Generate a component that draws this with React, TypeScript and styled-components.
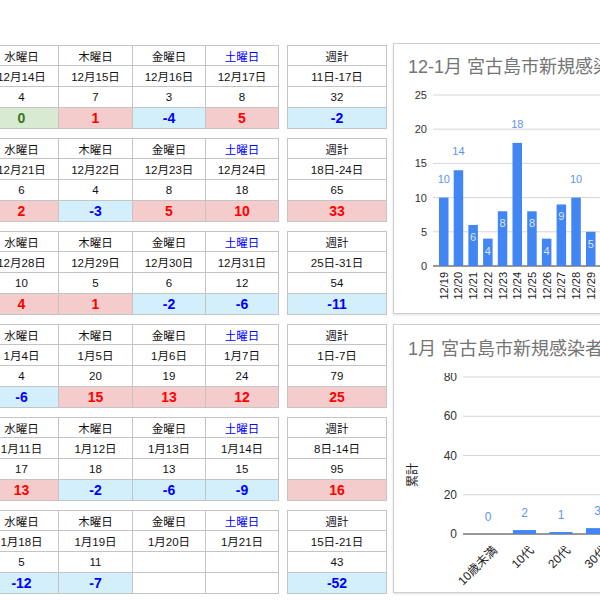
import React from 'react';
import styled, { createGlobalStyle } from 'styled-components';

const GlobalStyle = createGlobalStyle`
  html, body { margin: 0; padding: 0; overflow: hidden; background: #fff; }
  body { font-family: "Liberation Sans", Arial, "Noto Sans CJK JP", sans-serif; color: #111; }
`;

type Tone = 'zero' | 'up' | 'down' | 'none';

interface Week {
  dates: string[];
  counts: string[];
  diffs: (number | null)[];
  range: string;
  total: string;
  totalDiff: number;
}

const weeks: Week[] = [
  { dates: ['12月14日', '12月15日', '12月16日', '12月17日'], counts: ['4', '7', '3', '8'], diffs: [0, 1, -4, 5], range: '11日-17日', total: '32', totalDiff: -2 },
  { dates: ['12月21日', '12月22日', '12月23日', '12月24日'], counts: ['6', '4', '8', '18'], diffs: [2, -3, 5, 10], range: '18日-24日', total: '65', totalDiff: 33 },
  { dates: ['12月28日', '12月29日', '12月30日', '12月31日'], counts: ['10', '5', '6', '12'], diffs: [4, 1, -2, -6], range: '25日-31日', total: '54', totalDiff: -11 },
  { dates: ['1月4日', '1月5日', '1月6日', '1月7日'], counts: ['4', '20', '19', '24'], diffs: [-6, 15, 13, 12], range: '1日-7日', total: '79', totalDiff: 25 },
  { dates: ['1月11日', '1月12日', '1月13日', '1月14日'], counts: ['17', '18', '13', '15'], diffs: [13, -2, -6, -9], range: '8日-14日', total: '95', totalDiff: 16 },
  { dates: ['1月18日', '1月19日', '1月20日', '1月21日'], counts: ['5', '11', '', ''], diffs: [-12, -7, null, null], range: '15日-21日', total: '43', totalDiff: -52 },
];

const dayNames = ['水曜日', '木曜日', '金曜日', '土曜日'];

const toneOf = (v: number | null): Tone => (v === null ? 'none' : v === 0 ? 'zero' : v > 0 ? 'up' : 'down');

const toneBg: Record<Tone, string> = { zero: '#d9ead3', up: '#f4cccc', down: '#d4effc', none: '#fff' };
const toneFg: Record<Tone, string> = { zero: '#38761d', up: '#ff0000', down: '#0000ff', none: '#111' };

const Viewport = styled.div`
  width: 600px;
  height: 600px;
  overflow: hidden;
`;

const Page = styled.div`
  display: flex;
  align-items: flex-start;
  gap: 6px;
  width: max-content;
  margin-left: -16px;
  padding-top: 43px;
`;

const Weeks = styled.div`
  display: flex;
  flex-direction: column;
  gap: 9px;
  margin-top: 2px;
`;

const WeekRow = styled.div`
  display: flex;
  gap: 8px;
`;

const DayGrid = styled.div`
  display: grid;
  grid-template-columns: 74px 74px 73px 73px;
  grid-template-rows: 20px 21px 21px 21px;
  border-top: 1px solid #c4c4c4;
  border-left: 1px solid #c4c4c4;
`;

const SumGrid = styled(DayGrid)`
  grid-template-columns: 99px;
`;

const Cell = styled.div<{ $kind: 'head' | 'text' | 'diff'; $tone?: Tone; $sat?: boolean }>`
  box-sizing: border-box;
  border-right: 1px solid #c4c4c4;
  border-bottom: 1px solid #c4c4c4;
  display: flex;
  align-items: center;
  justify-content: center;
  white-space: nowrap;
  overflow: hidden;
  font-size: ${(p) => (p.$kind === 'diff' ? '14px' : '11.5px')};
  font-weight: ${(p) => (p.$kind === 'diff' ? 700 : 400)};
  color: ${(p) => (p.$kind === 'diff' ? toneFg[p.$tone ?? 'none'] : p.$sat ? '#0000ff' : '#111')};
  background: ${(p) => (p.$kind === 'diff' ? toneBg[p.$tone ?? 'none'] : '#fff')};
`;

const ChartCol = styled.div`
  display: flex;
  flex-direction: column;
  gap: 10px;
  width: 260px;
  flex-shrink: 0;
`;

const Card = styled.div<{ $h: number }>`
  box-sizing: border-box;
  height: ${(p) => p.$h}px;
  border: 1px solid #cfcfcf;
  box-shadow: 0 1px 2px rgba(0, 0, 0, 0.12);
  background: #fff;
  display: flex;
  flex-direction: column;
  overflow: hidden;
`;

const CardTitle = styled.div<{ $h: number }>`
  height: ${(p) => p.$h}px;
  line-height: ${(p) => p.$h}px;
  padding-left: 14px;
  font-size: 18px;
  color: #757575;
  white-space: nowrap;
`;

const ChartSvg = styled.svg`
  display: block;
  font-family: "Liberation Sans", Arial, "Noto Sans CJK JP", sans-serif;
  flex: 1;
`;

const daily: [string, number][] = [
  ['12/19', 10], ['12/20', 14], ['12/21', 6], ['12/22', 4], ['12/23', 8], ['12/24', 18],
  ['12/25', 8], ['12/26', 4], ['12/27', 9], ['12/28', 10], ['12/29', 5], ['12/30', 6],
  ['12/31', 12], ['1/1', 9], ['1/2', 11],
];

const BLUE = '#4285f4';

const DailyChart: React.FC = () => {
  const base = 176;
  const unit = 6.84;
  const ticks = [0, 5, 10, 15, 20, 25];
  return (
    <ChartSvg width={258} height={223}>
      {ticks.map((t) => (
        <g key={t}>
          <line x1={39} x2={400} y1={base - t * unit} y2={base - t * unit} stroke={t === 0 ? '#333' : '#d6d6d6'} strokeWidth={1} />
          <text x={33} y={base - t * unit} textAnchor="end" dominantBaseline="central" fontSize={11} fill="#333">{t}</text>
        </g>
      ))}
      {daily.map(([d, v], i) => {
        const x = 45 + 14.7 * i;
        const h = v * unit;
        const cx = x + 4.75;
        const top = base - h;
        const outside = v >= 10;
        return (
          <g key={d}>
            <rect x={x} y={top} width={9.5} height={h} fill={BLUE} />
            <text x={cx} y={outside ? top - 19 : top + 12} textAnchor="middle" dominantBaseline="central" fontSize={11} fill={outside ? '#5b95f5' : '#dbe7fd'}>{v}</text>
            <text transform={`translate(${cx + 4} 182) rotate(-90)`} textAnchor="end" fontSize={11} fill="#222">{d}</text>
          </g>
        );
      })}
    </ChartSvg>
  );
};

const ages: [string, number][] = [
  ['10歳未満', 0], ['10代', 2], ['20代', 1], ['30代', 3], ['40代', 2], ['50代', 1],
];

const AgeChart: React.FC = () => {
  const base = 161;
  const unit = 1.9625;
  const ticks = [0, 20, 40, 60, 80];
  return (
    <ChartSvg width={258} height={219}>
      {ticks.map((t) => (
        <g key={t}>
          <line x1={69} x2={400} y1={base - t * unit} y2={base - t * unit} stroke={t === 0 ? '#333' : '#d6d6d6'} strokeWidth={1} />
          <text x={63} y={base - t * unit} textAnchor="end" dominantBaseline="central" fontSize={12} fill="#333">{t}</text>
        </g>
      ))}
      <text transform="translate(19 102) rotate(-90)" textAnchor="middle" dominantBaseline="central" fontSize={12} fill="#222">累計</text>
      {ages.map(([a, v], i) => {
        const cx = 94 + 36.5 * i;
        const h = v * unit;
        const top = base - h;
        return (
          <g key={a}>
            {v > 0 && <rect x={cx - 11.5} y={top} width={23} height={h} fill={BLUE} />}
            <text x={cx} y={top - 17} textAnchor="middle" dominantBaseline="central" fontSize={12} fill="#5b95f5">{v}</text>
            <text transform={`translate(${cx + 10} 178) rotate(-45)`} textAnchor="end" fontSize={12} fill="#222">{a}</text>
          </g>
        );
      })}
    </ChartSvg>
  );
};

const WeekBlock: React.FC<{ w: Week }> = ({ w }) => (
  <WeekRow>
    <DayGrid>
      {dayNames.map((n, i) => (
        <Cell key={n} $kind="head" $sat={i === 3}>{n}</Cell>
      ))}
      {w.dates.map((d) => (
        <Cell key={d} $kind="text">{d}</Cell>
      ))}
      {w.counts.map((c, i) => (
        <Cell key={i} $kind="text">{c}</Cell>
      ))}
      {w.diffs.map((d, i) => (
        <Cell key={i} $kind="diff" $tone={toneOf(d)}>{d === null ? '' : d}</Cell>
      ))}
    </DayGrid>
    <SumGrid>
      <Cell $kind="head">週計</Cell>
      <Cell $kind="text">{w.range}</Cell>
      <Cell $kind="text">{w.total}</Cell>
      <Cell $kind="diff" $tone={toneOf(w.totalDiff)}>{w.totalDiff}</Cell>
    </SumGrid>
  </WeekRow>
);

export default function App() {
  return (
    <Viewport>
      <GlobalStyle />
      <Page>
        <Weeks>
          {weeks.map((w) => (
            <WeekBlock key={w.range} w={w} />
          ))}
        </Weeks>
        <ChartCol>
          <Card $h={271}>
            <CardTitle $h={46}>12-1月 宮古島市新規感染者数</CardTitle>
            <DailyChart />
          </Card>
          <Card $h={269}>
            <CardTitle $h={48}>1月 宮古島市新規感染者 年代別</CardTitle>
            <AgeChart />
          </Card>
        </ChartCol>
      </Page>
    </Viewport>
  );
}
